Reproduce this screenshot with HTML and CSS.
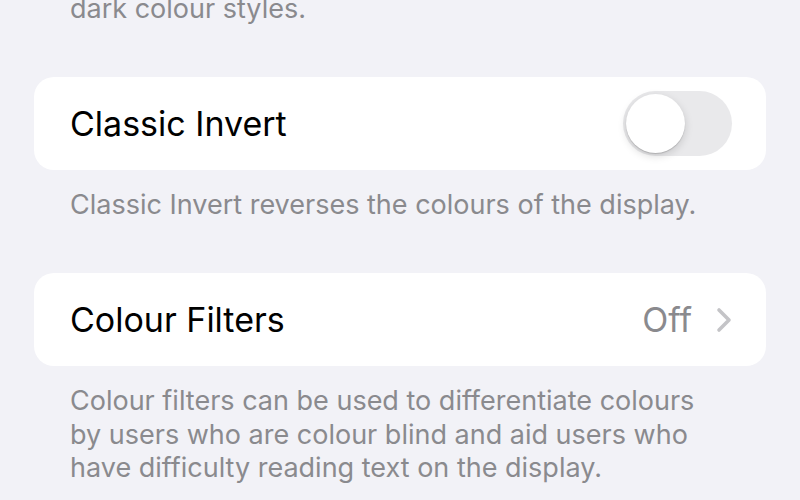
FILE: index.html
```html
<!DOCTYPE html>
<html lang="en">
<head>
    <meta charset="UTF-8">
    <meta name="viewport" content="width=device-width, initial-scale=1.0">
    <title>Display &amp; Text Size</title>
    <link rel="stylesheet" href="styles.css">
</head>
<body>
    <div class="settings">
        <!-- tail of the Smart Invert footer, scrolled off the top -->
        <p class="footer footer-top">dark colour styles.</p>

        <div class="group">
            <div class="row">
                <span class="row-label">Classic Invert</span>
                <span class="toggle"><span class="knob"></span></span>
            </div>
        </div>
        <p class="footer">Classic Invert reverses the colours of the display.</p>

        <div class="group">
            <div class="row">
                <span class="row-label">Colour Filters</span>
                <span class="row-value">Off</span>
                <svg class="chevron" viewBox="0 0 16 26" width="16" height="26">
                    <path d="M3 3 L13 13 L3 23" fill="none" stroke="#c4c4c7" stroke-width="3.6" stroke-linecap="round" stroke-linejoin="round"/>
                </svg>
            </div>
        </div>
        <p class="footer footer-last">Colour filters can be used to differentiate colours by users who are colour blind and aid users who have difficulty reading text on the display.</p>
    </div>
</body>
</html>
```

FILE: styles.css
```css
* {
    box-sizing: border-box;
    margin: 0;
    padding: 0;
}
body {
    font-family: Inter, "Noto Sans", sans-serif;
    background-color: #f2f2f7;
    height: 500px;
    overflow: hidden;
}
.settings {
    padding: 0 34px;
}
.footer {
    padding: 0 36px;
    font-size: 27px;
    line-height: 33.5px;
    color: #8a8a8e;
    margin: 18px 0 52px;
}
.footer-top {
    margin-top: -8px;
    margin-bottom: 51px;
}
.footer-last {
    margin-bottom: 0;
}
.group {
    background-color: #ffffff;
    border-radius: 20px;
}
.row {
    display: flex;
    align-items: center;
    height: 93px;
    padding: 0 34px 0 36px;
}
.row-label {
    flex: 1;
    font-size: 34px;
    color: #000000;
}
.row-value {
    font-size: 34px;
    color: #8a8a8e;
    margin-right: 24px;
}
.toggle {
    position: relative;
    width: 109px;
    height: 65px;
    border-radius: 33px;
    background-color: #e9e9eb;
}
.knob {
    position: absolute;
    top: 3px;
    left: 3px;
    width: 59px;
    height: 59px;
    border-radius: 50%;
    background-color: #ffffff;
    box-shadow: 0 3px 8px rgba(0, 0, 0, 0.15), 0 1px 1px rgba(0, 0, 0, 0.16);
}
.chevron {
    display: block;
}
```
